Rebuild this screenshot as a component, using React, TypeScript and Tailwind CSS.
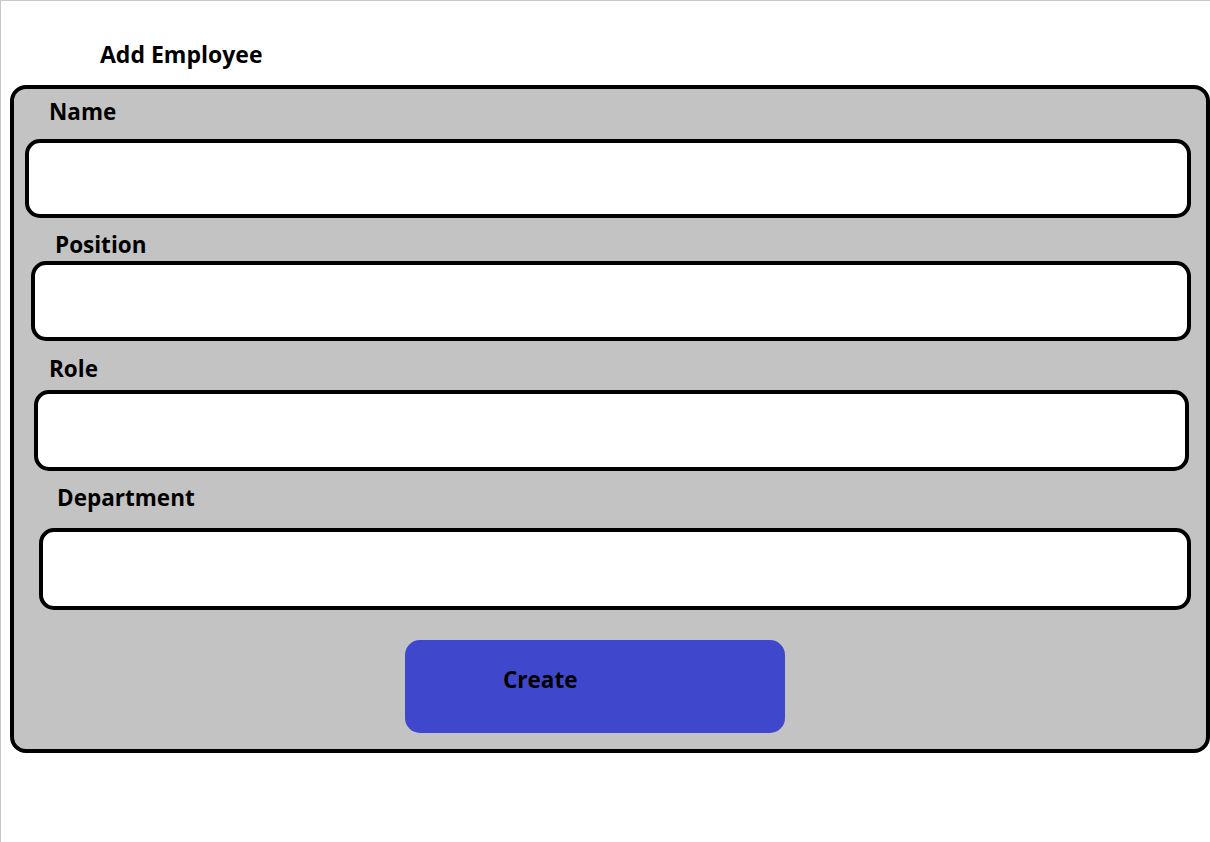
const labelCls = "block text-[22.5px] leading-[21px] font-bold text-black";
const boxCls = "rounded-[15px] border-4 border-black bg-white";

function Field({
  label,
  labelCls: lc,
  boxCls: bc,
}: {
  label: string;
  labelCls: string;
  boxCls: string;
}) {
  return (
    <>
      <span className={`${labelCls} ${lc}`}>{label}</span>
      <div className={`${boxCls} ${bc}`}></div>
    </>
  );
}

export default function App() {
  return (
    <div
      className="h-[842px] w-[1210px] overflow-hidden border-l border-t border-[#c8c8c8] bg-white"
      style={{ fontFamily: "'Open Sans', sans-serif" }}
    >
      <h1 className="ml-[99px] mt-[43px] text-[23px] leading-[21px] font-bold text-black">Add Employee</h1>
      <div className="ml-[9px] mt-[20px] w-[1200px] rounded-[16px] border-4 border-black bg-[#c3c3c3] pb-[16px]">
        <Field label="Name" labelCls="ml-[35px] mt-[12px]" boxCls="ml-[11px] mt-[17px] h-[79px] w-[1166px]" />
        <Field label="Position" labelCls="ml-[41px] mt-[16px]" boxCls="ml-[17px] mt-[6px] h-[80px] w-[1160px]" />
        <Field label="Role" labelCls="ml-[35px] mt-[17px]" boxCls="ml-[20px] mt-[11px] h-[81px] w-[1155px]" />
        <Field label="Department" labelCls="ml-[43px] mt-[16px]" boxCls="ml-[25px] mt-[20px] h-[82px] w-[1152px]" />
        <button className="ml-[391px] mt-[30px] flex h-[93px] w-[380px] items-start rounded-[15px] bg-[#3f48cc] pl-[98px] pt-[29px]">
          <span className="block text-[22.5px] leading-[21px] font-bold text-black">Create</span>
        </button>
      </div>
    </div>
  );
}
